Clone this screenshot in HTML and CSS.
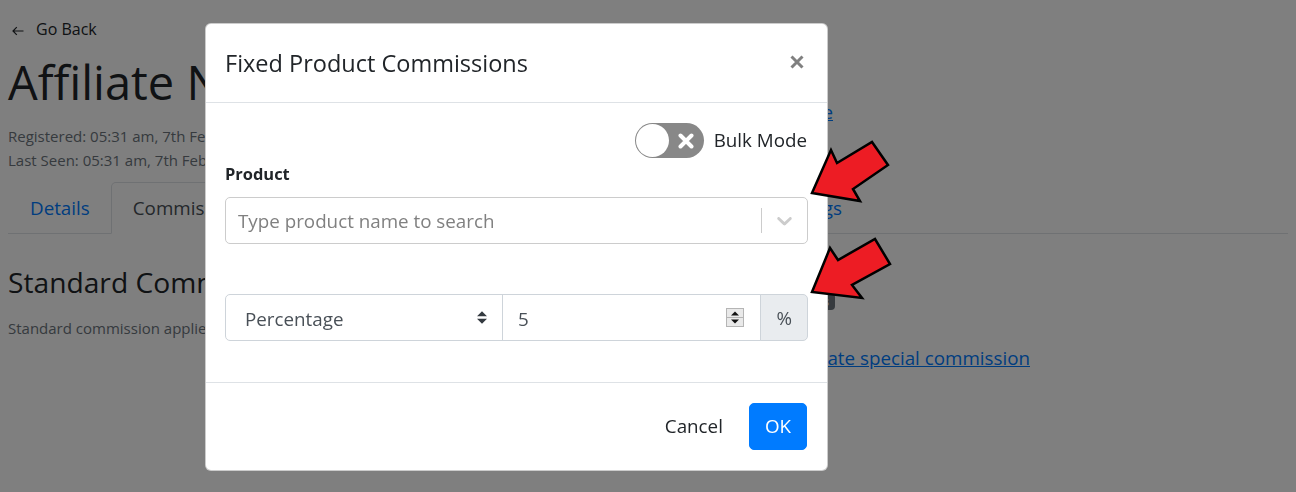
FILE: index.html
```html
<!DOCTYPE html>
<html lang="en">
<head>
<meta charset="utf-8">
<title>Affiliate – Commissions</title>
<link rel="stylesheet" href="styles.css">
</head>
<body>
<div class="page">
  <header class="page-head">
    <div class="head-main">
      <a class="back" href="#">
        <svg class="back-icon" width="12" height="10" viewBox="0 0 12 10" aria-hidden="true"><path d="M11.5 5H1M4.8 1.2L1 5l3.8 3.8" fill="none" stroke="#212529" stroke-width="1.2"/></svg>
        <span>Go Back</span>
      </a>
      <h1 class="title">Affiliate Name</h1>
      <div class="meta">Registered: 05:31 am, 7th February 2021</div>
      <div class="meta meta-last">Last Seen: 05:31 am, 7th February 2021</div>
    </div>
    <a class="head-link" href="#">Impersonate</a>
  </header>

  <nav class="tabs">
    <div class="tab-list">
      <a class="tab" href="#">Details</a>
      <a class="tab active" href="#">Commissions</a>
      <a class="tab" href="#">Referrals</a>
      <a class="tab tab-last" href="#">Settings</a>
    </div>
  </nav>

  <section class="tab-content">
    <div class="col">
      <h4 class="sub">Standard Commission</h4>
      <p class="small">Standard commission applies to all products</p>
    </div>
    <div class="col col-right">
      <div class="badge-row"><span class="badge">Products</span></div>
      <div class="link-row"><a class="ul-link" href="#">Create special commission</a></div>
    </div>
  </section>
</div>

<div class="backdrop"></div>

<div class="modal" role="dialog" aria-label="Fixed Product Commissions">
  <div class="modal-header">
    <h5 class="modal-title">Fixed Product Commissions</h5>
    <button class="close" type="button" aria-label="Close">
      <svg width="14" height="14" viewBox="0 0 14 14" aria-hidden="true"><path d="M1.5 1.5l11 11M12.5 1.5l-11 11" stroke="#808080" stroke-width="3"/></svg>
    </button>
  </div>
  <div class="modal-body">
    <div class="switch-row">
      <span class="switch" role="switch" aria-checked="false">
        <svg class="switch-x" width="16" height="16" viewBox="0 0 16 16" aria-hidden="true"><path d="M2.5 2.5l11 11M13.5 2.5l-11 11" stroke="#fff" stroke-width="4" stroke-linecap="round"/></svg>
        <span class="knob"></span>
      </span>
      <span class="switch-label">Bulk Mode</span>
    </div>
    <div class="form-group">
      <label class="label">Product</label>
      <div class="rs-control">
        <div class="rs-value">Type product name to search</div>
        <span class="rs-sep"></span>
        <span class="rs-ind">
          <svg width="25" height="25" viewBox="0 0 20 20" aria-hidden="true"><path fill="#ccc" d="M4.516 7.548c0.436-0.446 1.043-0.481 1.576 0l3.908 3.747 3.908-3.747c0.533-0.481 1.141-0.446 1.574 0 0.436 0.445 0.408 1.197 0 1.615-0.406 0.418-4.695 4.502-4.695 4.502-0.217 0.223-0.502 0.335-0.787 0.335s-0.57-0.112-0.789-0.335c0 0-4.287-4.084-4.695-4.502s-0.436-1.17 0-1.615z"/></svg>
        </span>
      </div>
    </div>
    <div class="input-group">
      <div class="cs-wrap">
        <select class="cs-select"><option>Percentage</option><option>Fixed</option></select>
        <svg class="cs-icon" width="10" height="13" viewBox="0 0 4 5" aria-hidden="true"><path fill="#343a40" d="M2 0L0 2h4zm0 5L0 3h4z"/></svg>
      </div>
      <div class="num-wrap">
        <input class="num-input" type="text" value="5" aria-label="Amount">
        <span class="spin" aria-hidden="true">
          <svg width="18" height="19" viewBox="0 0 18 19"><rect x="0.5" y="0.5" width="17" height="18" fill="#e9e9e9" stroke="#b5b5b5"/><path d="M1 9.5h16" stroke="#b5b5b5"/><path d="M9 3.5l4 4H5z M9 15.5l4-4H5z" fill="#111"/></svg>
        </span>
      </div>
      <span class="addon">%</span>
    </div>
  </div>
  <div class="modal-footer">
    <button class="btn btn-plain" type="button">Cancel</button>
    <button class="btn btn-primary" type="button">OK</button>
  </div>
</div>

<svg class="arrows" width="1296" height="492" viewBox="0 0 1296 492" aria-hidden="true">
  <polygon points="812,193 831,150 837,163 872,142 888,165 853,189 860,201" fill="#ed1c24" stroke="#000" stroke-width="2.5" stroke-linejoin="miter"/>
  <polygon points="812,292 830,248 838,260 875,239 890,264 852,285 862,298" fill="#ed1c24" stroke="#000" stroke-width="2.5" stroke-linejoin="miter"/>
</svg>
</body>
</html>
```

FILE: styles.css
```css
* { box-sizing: border-box; }
html, body { margin: 0; padding: 0; }
body {
  font-family: "Open Sans", "Noto Sans", "DejaVu Sans", sans-serif;
  font-size: 18.8px;
  line-height: 30px;
  color: #212529;
  background: #fff;
  width: 1296px;
  height: 492px;
  overflow: hidden;
}
a { color: #007bff; text-decoration: none; }

/* ---------- background page ---------- */
.page { padding: 16px 8px 0; }
.page-head {
  display: flex;
  justify-content: space-between;
  align-items: flex-start;
  width: 825px;
}
.back {
  display: flex;
  align-items: center;
  gap: 12px;
  padding-left: 4px;
  margin-bottom: 10px;
  color: #212529;
  font-size: 16px;
  line-height: 26px;
}
.back-icon { margin-top: 3px; }
.title {
  margin: 0 0 12px;
  font-size: 47px;
  line-height: 60px;
  font-weight: 400;
}
.meta { font-size: 15px; line-height: 24px; color: #6c757d; }
.meta-last { margin-bottom: 10px; }
.head-link { margin-top: 81px; text-decoration: underline; }

.tabs { border-bottom: 1px solid #dee2e6; }
.tab-list { display: flex; width: 855px; }
.tab {
  display: block;
  padding: 10px 20px 10px 21px;
  border: 1px solid transparent;
  border-radius: 5px 5px 0 0;
  margin-bottom: -1px;
  line-height: 30px;
}
.tab.active { color: #495057; background: #fff; border-color: #dee2e6 #dee2e6 #fff; }
.tab-last { margin-left: auto; }

.tab-content {
  display: grid;
  grid-template-columns: 640px 1fr;
  padding-top: 30px;
}
.sub { margin: 0 0 16px; font-size: 28.2px; line-height: 36px; font-weight: 400; }
.small { margin: 0; font-size: 15px; line-height: 24px; color: #6c757d; }
.badge-row { width: 187px; margin-top: 29px; display: flex; justify-content: flex-end; }
.badge {
  background: #6c757d; color: #fff; font-size: 12px; font-weight: 700;
  line-height: 17px; padding: 0 6px; border-radius: 4px;
}
.link-row { width: 382px; margin-top: 33px; text-align: right; }
.ul-link { text-decoration: underline; }

.backdrop { position: fixed; inset: 0; background: rgba(0, 0, 0, 0.5); }

/* ---------- modal ---------- */
.modal {
  position: fixed;
  left: 205px;
  top: 23px;
  width: 623px;
  background: #fff;
  border: 1px solid rgba(0, 0, 0, 0.2);
  border-radius: 6px;
}
.modal-header {
  display: flex;
  align-items: flex-start;
  padding: 20px 19px 19px;
  border-bottom: 1px solid #dee2e6;
}
.modal-title { margin: 1px 0 0; font-size: 23.5px; line-height: 37.5px; font-weight: 400; }
.close {
  margin: 0 4px 0 auto;
  padding: 0;
  border: 0;
  background: transparent;
  height: 37.5px;
  display: flex;
  align-items: center;
  padding-bottom: 2px;
}
.close svg { display: block; }

.modal-body { padding: 20px 19px; }
.switch-row {
  display: flex;
  justify-content: flex-end;
  align-items: center;
  gap: 10px;
  height: 35px;
}
.switch {
  position: relative;
  display: block;
  width: 69px;
  height: 35px;
  border-radius: 17.5px;
  background: #888;
}
.switch-x { position: absolute; left: 43px; top: 10px; }
.knob {
  position: absolute;
  left: 1px;
  top: 1px;
  width: 33px;
  height: 33px;
  border-radius: 50%;
  background: #fff;
}
.switch-label { font-size: 18.8px; line-height: 30px; margin-right: 1px; }

.form-group { margin-top: 3px; margin-bottom: 50px; }
.label { display: block; margin-bottom: 10px; font-size: 16.45px; line-height: 26px; font-weight: 700; }
.rs-control {
  display: flex;
  align-items: center;
  height: 47px;
  border: 1px solid #ccc;
  border-radius: 5px;
}
.rs-value { flex: 1; padding: 2px 12px 0; color: #808080; }
.rs-sep { align-self: stretch; width: 1px; margin: 10px 0; background: #ccc; }
.rs-ind { display: flex; padding: 0 10px; }
.rs-ind svg { display: block; }

.input-group { display: flex; height: 47px; margin-bottom: 21px; }
.cs-wrap {
  flex: 0 0 278px;
  display: flex;
  align-items: center;
  border: 1px solid #ced4da;
  border-radius: 5px 0 0 5px;
}
.cs-select {
  flex: 1;
  min-width: 0;
  height: 100%;
  appearance: none;
  -webkit-appearance: none;
  border: 0;
  background: transparent;
  font: inherit;
  color: #495057;
  padding: 3px 0 0 19px;
  outline: none;
}
.cs-icon { margin-right: 15px; }
.num-wrap {
  flex: 1 1 0;
  min-width: 0;
  display: flex;
  align-items: center;
  margin-left: -1px;
  border: 1px solid #ced4da;
}
.num-input {
  flex: 1;
  min-width: 0;
  height: 100%;
  border: 0;
  outline: none;
  background: transparent;
  font: inherit;
  color: #495057;
  padding: 3px 0 0 15px;
}
.spin { display: flex; margin-right: 16px; margin-top: 1px; }
.addon {
  flex: 0 0 auto;
  display: flex;
  align-items: center;
  margin-left: -1px;
  padding: 2px 15px 0;
  background: #e9ecef;
  border: 1px solid #ced4da;
  border-radius: 0 5px 5px 0;
  color: #495057;
}

.modal-footer {
  display: flex;
  justify-content: flex-end;
  align-items: center;
  padding: 15px;
  border-top: 1px solid #dee2e6;
}
.btn {
  margin: 5px;
  padding: 7.5px 15px;
  border: 1px solid transparent;
  border-radius: 5px;
  font: inherit;
  line-height: 30px;
  background: transparent;
  color: #212529;
}
.btn-primary { background: #007bff; border-color: #007bff; color: #fff; }

.arrows { position: fixed; left: 0; top: 0; pointer-events: none; }
```
